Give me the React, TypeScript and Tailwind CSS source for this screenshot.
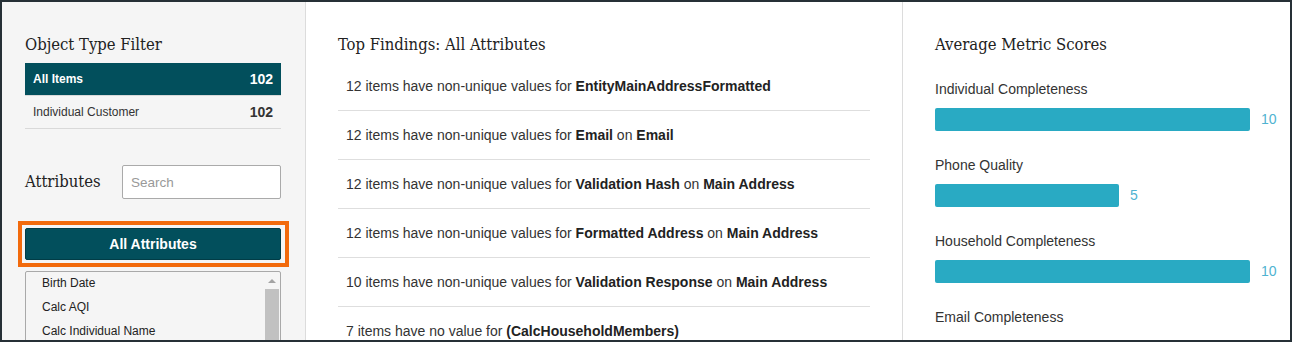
import React from 'react';

const serif = { fontFamily: '"DejaVu Serif Condensed", "DejaVu Serif", serif', fontStretch: 'condensed' };

const objectTypes = [
  { label: 'All Items', count: 102, active: true },
  { label: 'Individual Customer', count: 102, active: false },
];

const attributes = ['Birth Date', 'Calc AQI', 'Calc Individual Name'];

const findings: { lead: string; parts: [string, boolean][] }[] = [
  { lead: '12 items have non-unique values for ', parts: [['EntityMainAddressFormatted', true]] },
  { lead: '12 items have non-unique values for ', parts: [['Email', true], [' on ', false], ['Email', true]] },
  { lead: '12 items have non-unique values for ', parts: [['Validation Hash', true], [' on ', false], ['Main Address', true]] },
  { lead: '12 items have non-unique values for ', parts: [['Formatted Address', true], [' on ', false], ['Main Address', true]] },
  { lead: '10 items have non-unique values for ', parts: [['Validation Response', true], [' on ', false], ['Main Address', true]] },
  { lead: '7 items have no value for ', parts: [['(CalcHouseholdMembers)', true]] },
];

const metrics = [
  { label: 'Individual Completeness', value: 10, width: 315 },
  { label: 'Phone Quality', value: 5, width: 184 },
  { label: 'Household Completeness', value: 10, width: 315 },
];

export default function App() {
  return (
    <div
      className="w-[1292px] h-[342px] border-2 border-[#263036] flex overflow-hidden bg-white text-[#333]"
      style={{ fontFamily: '"Liberation Sans", Arial, sans-serif' }}
    >
      {/* Left: filters */}
      <div className="w-[304px] shrink-0 bg-[#f5f5f5] border-r border-[#dcdcdc] pl-[23px] pr-[24px] pt-[27px]">
        <h2 className="text-[16.5px] leading-[31px] h-[28px] text-[#222]" style={serif}>
          Object Type Filter
        </h2>
        <div className="mt-[6px]">
          {objectTypes.map((t) => (
            <div
              key={t.label}
              className={`h-[33px] flex items-center justify-between pl-[8px] pr-[8px] border-b border-[#d9d9d9] ${
                t.active ? 'bg-[#024f5c] text-white' : 'text-[#333]'
              }`}
            >
              <span className={`text-[12px] ${t.active ? 'font-bold' : ''}`}>{t.label}</span>
              <span className="text-[14px] font-bold">{t.count}</span>
            </div>
          ))}
        </div>

        <div className="mt-[36px] flex items-center justify-between">
          <h2 className="text-[16.5px] leading-[28px] text-[#222]" style={serif}>
            Attributes
          </h2>
          <input
            className="w-[159px] h-[34px] border border-[#aaa] rounded-[2px] bg-white px-[8px] text-[13.5px] placeholder:text-[#999] outline-none"
            placeholder="Search"
          />
        </div>

        {/* highlighted selection */}
        <div className="mt-[22px] -ml-[7px] -mr-[8px] border-4 border-[#f26a0c] pl-[3px] pr-[4px] py-[3px]">
          <button className="w-full h-[32px] rounded-[2px] bg-[#024f5c] border border-[#013c46] text-white text-[14px] font-bold">
            All Attributes
          </button>
        </div>

        <div className="mt-[4px] h-[80px] border border-[#a9a9a9] rounded-[2px] bg-[#f5f5f5] flex">
          <div className="flex-1 pl-[16px]">
            {attributes.map((a) => (
              <div key={a} className="h-[24px] leading-[22px] text-[12px] text-[#222]">
                {a}
              </div>
            ))}
          </div>
          <div className="w-[14px] mr-[1px] flex flex-col items-center">
            <div className="h-[17px] flex items-center justify-center">
              <div className="w-0 h-0 border-l-[4px] border-r-[4px] border-b-[4px] border-l-transparent border-r-transparent border-b-[#a3a3a3]" />
            </div>
            <div className="w-full flex-1 bg-[#c1c1c1]" />
          </div>
        </div>
      </div>

      {/* Middle: findings */}
      <div className="w-[597px] shrink-0 border-r border-[#dcdcdc] px-[32px] pt-[27px]">
        <h2 className="text-[16.5px] leading-[31px] h-[28px] text-[#222]" style={serif}>
          Top Findings: All Attributes
        </h2>
        <div className="mt-[5px]">
          {findings.map((f, i) => (
            <div key={i} className="h-[49px] flex items-center pl-[8px] border-b border-[#dedede] text-[14px] whitespace-pre">
              <span>{f.lead}</span>
              {f.parts.map(([txt, bold], j) => (
                <span key={j} className={bold ? 'font-bold text-[#222]' : ''}>
                  {txt}
                </span>
              ))}
            </div>
          ))}
        </div>
      </div>

      {/* Right: metrics */}
      <div className="flex-1 px-[32px] pt-[27px]">
        <h2 className="text-[16.5px] leading-[31px] h-[28px] text-[#222]" style={serif}>
          Average Metric Scores
        </h2>
        <div className="mt-[22px] flex flex-col gap-[24px]">
          {metrics.map((m) => (
            <div key={m.label}>
              <div className="text-[14px] leading-[20px] text-[#333]">{m.label}</div>
              <div className="mt-[8px] h-[24px] flex items-center">
                <div className="h-[23px] rounded-[2px] bg-[#29aac3]" style={{ width: m.width }} />
                <span className="ml-[11px] text-[14px] text-[#4fb3d1]">{m.value}</span>
              </div>
            </div>
          ))}
          <div className="text-[14px] leading-[20px] text-[#333]">Email Completeness</div>
        </div>
      </div>
    </div>
  );
}
